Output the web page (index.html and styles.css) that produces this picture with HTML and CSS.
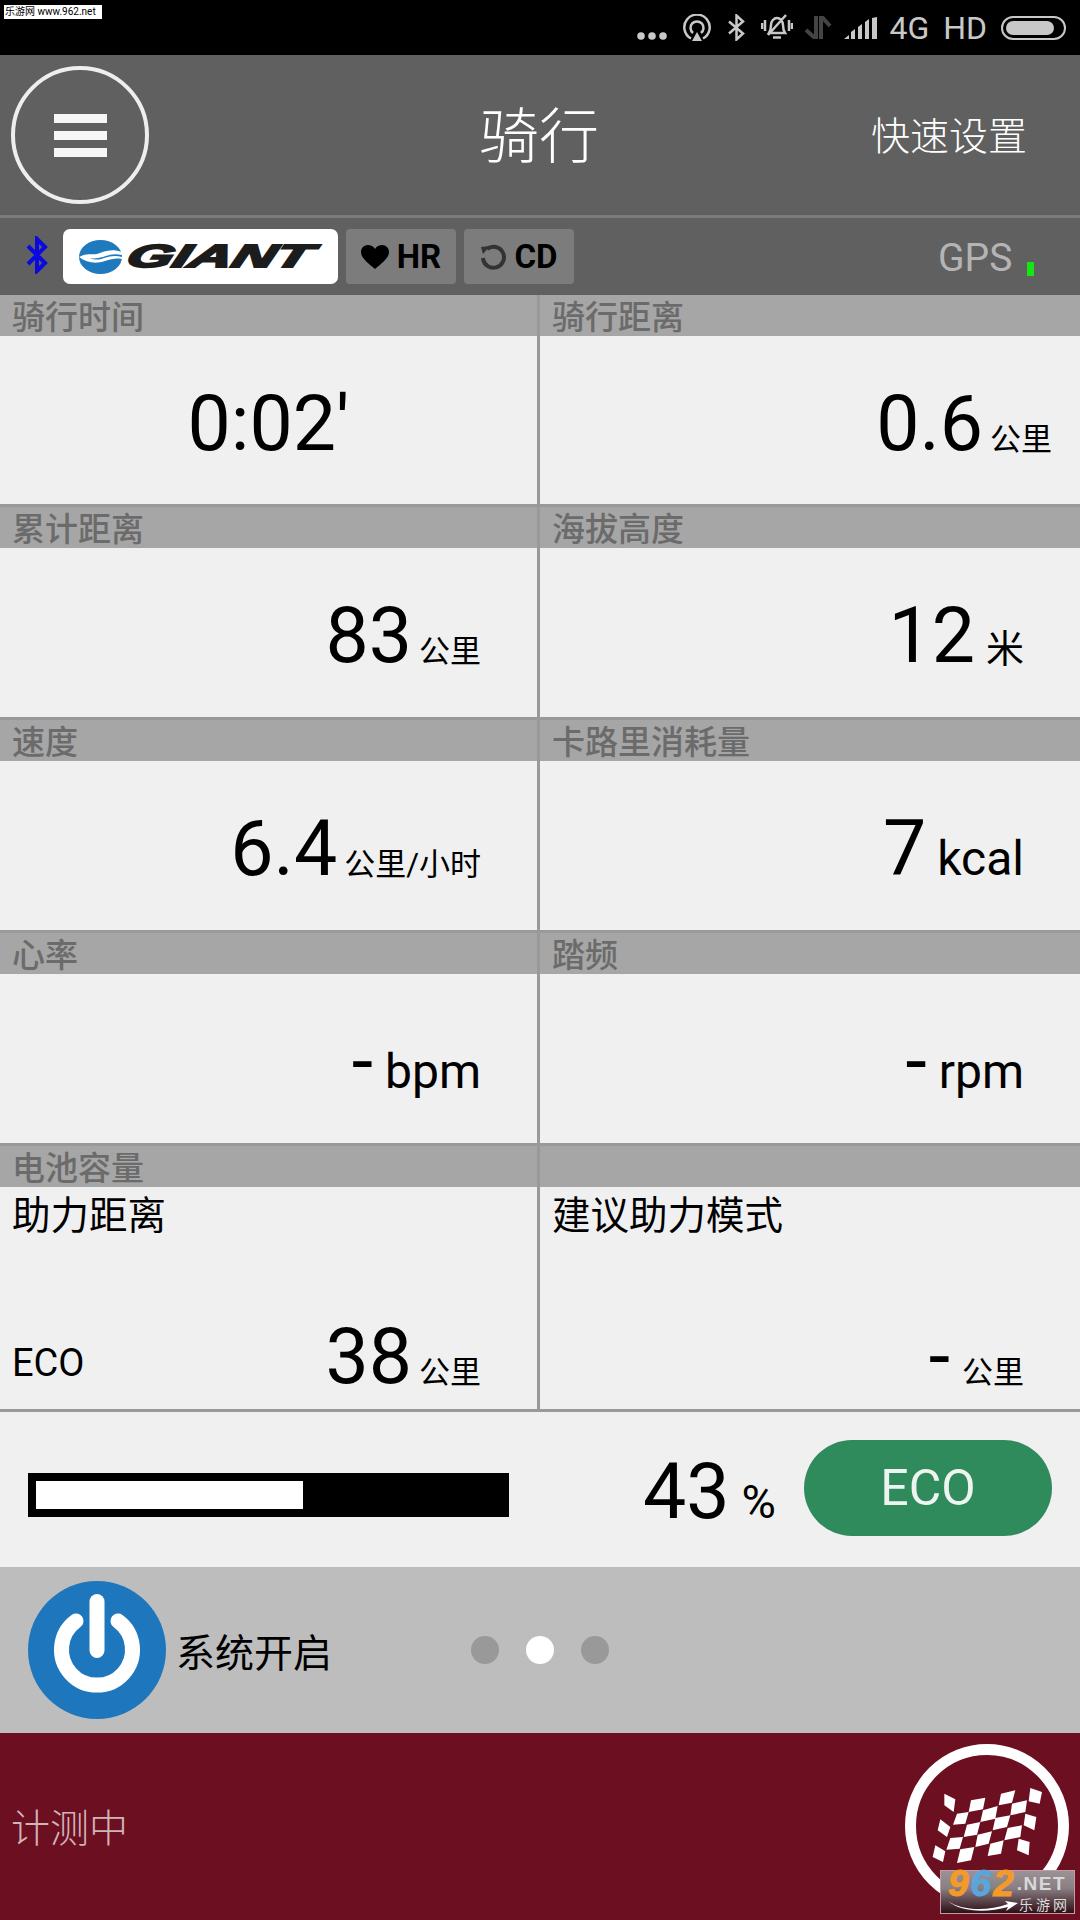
FILE: index.html
```html
<!DOCTYPE html>
<html lang="zh">
<head>
<title>骑行</title>
<meta charset="utf-8">
<link rel="stylesheet" href="styles.css">
</head>
<body>

<div class="statusbar">
  <div class="stamp">乐游网 www.962.net</div>
  <div class="status-icons">
    <svg class="dots" width="30" height="8" viewBox="0 0 30 8"><circle cx="4" cy="4" r="3.800"/><circle cx="15" cy="4" r="3.800"/><circle cx="26" cy="4" r="3.800"/></svg>
    <svg class="icon-cast" width="28" height="27" viewBox="0 0 28 27"><path d="M8 24.500A12.700 12.700 0 1 1 20 24.500"/><path d="M10 19A6.500 6.500 0 1 1 18 19"/><path class="fill" d="M14 18l5 9H9z"/></svg>
    <svg class="icon-bt" width="19" height="27" viewBox="0 0 19 27"><path d="M2 7.500l14 12-6.500 6V1.500l6.500 6-14 12"/></svg>
    <svg class="icon-bell" width="32" height="28" viewBox="0 0 32 28"><path d="M8 20c2-3 2-5 2-8 0-4 3-7 6-7s6 3 6 7c0 3 0 5 2 8zM12 24.500h8M25 2L7 22M1 10v6M4 7v11M31 10v6M28 7v11"/></svg>
    <svg class="icon-data" width="27" height="23" viewBox="0 0 27 23"><path d="M11 0v23L1 14M16 23V0l9 10"/></svg>
    <svg class="icon-signal" width="34" height="22" viewBox="0 0 34 22"><path d="M0 22l5-4v4zM7 22v-7l4-3v10zM14 22V10l4-3v15zM21 22V5l4-3v20zM28 22V1l5-1v22z"/></svg>
    <span class="status-text">4G</span>
    <span class="status-text">HD</span>
    <div class="battery"><div class="battery-level"></div></div>
  </div>
</div>

<header class="topbar">
  <div class="menu-btn"><span></span><span></span><span></span></div>
  <h1>骑行</h1>
  <div class="quick">快速设置</div>
</header>

<div class="toolbar">
  <svg class="bt" width="24" height="38" viewBox="0 0 24 38"><path d="M3 10l17 17-8 8V3l8 8L3 28"/></svg>
  <div class="giant">
    <svg width="43" height="34" viewBox="0 0 43 34"><ellipse cx="21.500" cy="17" rx="21.500" ry="17" fill="#1f79bd"/><path d="M0 17c7-4 12-2 18-3 7-2 13-6 25-2v3c-8-2-14 0-19 2-5 1-8 2-13 1 5 2 9 2 14 0 6-2 12-3 18-1v2c-6-1-11 0-17 2-9 3-18 2-26-4z" fill="#fff"/></svg>
    <span>GIANT</span>
  </div>
  <div class="chip">
    <svg width="28" height="24" viewBox="0 0 28 24"><path d="M14 24C7 18 0 13 0 7c0-4 3-7 7-7 3 0 5 1 7 4 2-3 4-4 7-4 4 0 7 3 7 7 0 6-7 11-14 17z"/></svg>
    HR
  </div>
  <div class="chip">
    <svg width="26" height="26" viewBox="0 0 26 26"><path class="ring" d="M7 5a10.500 10.500 0 1 1-4 9"/><path class="tip" d="M1 3l9-1-7 8z"/></svg>
    CD
  </div>
  <div class="gps">GPS<i></i></div>
</div>

<main class="grid">
  <section class="cell first">
    <h2>骑行时间</h2>
    <div class="value center"><b>0:02'</b></div>
  </section>
  <section class="cell first">
    <h2>骑行距离</h2>
    <div class="value near"><b>0.6</b><span>公里</span></div>
  </section>
  <section class="cell">
    <h2>累计距离</h2>
    <div class="value"><b>83</b><span>公里</span></div>
  </section>
  <section class="cell">
    <h2>海拔高度</h2>
    <div class="value"><b>12</b><span class="metre">米</span></div>
  </section>
  <section class="cell">
    <h2>速度</h2>
    <div class="value"><b>6.4</b><span>公里/小时</span></div>
  </section>
  <section class="cell">
    <h2>卡路里消耗量</h2>
    <div class="value"><b>7</b><span class="latin">kcal</span></div>
  </section>
  <section class="cell">
    <h2>心率</h2>
    <div class="value"><b class="dash">-</b><span class="latin">bpm</span></div>
  </section>
  <section class="cell">
    <h2>踏频</h2>
    <div class="value"><b class="dash">-</b><span class="latin">rpm</span></div>
  </section>
  <section class="cell tall">
    <h2>电池容量</h2>
    <div class="assist-title">助力距离</div>
    <div class="value assist"><em>ECO</em><b>38</b><span>公里</span></div>
  </section>
  <section class="cell tall">
    <h2>&nbsp;</h2>
    <div class="assist-title">建议助力模式</div>
    <div class="value assist"><b class="dash">-</b><span>公里</span></div>
  </section>
</main>

<div class="battery-row">
  <div class="bar"><div class="bar-fill" style="width: 267px"></div></div>
  <div class="percent"><b>43</b><span>%</span></div>
  <div class="eco">ECO</div>
</div>

<div class="system-row">
  <svg class="power" width="138" height="138" viewBox="0 0 138 138"><circle cx="69" cy="69" r="69" fill="#1e76bd"/><path d="M48 40A35.500 35.500 0 1 0 90 40" fill="none" stroke="#fff" stroke-width="15" stroke-linecap="round"/><path d="M69 20.500v49" fill="none" stroke="#fff" stroke-width="15" stroke-linecap="round"/></svg>
  <div class="system-label">系统开启</div>
  <div class="pager"><i></i><i class="on"></i><i></i></div>
</div>

<footer class="status-row">
  <div class="measuring">计测中</div>
  <div class="finish">
    <svg width="110" height="76" viewBox="515 268 330 228" fill="#fff">
      <path d="M552 285l33 17-5 38-28-20zM632 305l43-8-7 35-43 8zM722 285l43-10-10 37-40 8zM810 268l35 12-7 35-33-7z"/>
      <path d="M590 345l35-5-10 35-37 3zM668 335l44-13-7 38-45 10zM755 315l45-10-5 35-45 10z"/>
      <path d="M540 362l30 23-10 30-28-20zM620 378l40-8-10 38-40 7zM705 358l45-8-10 35-43 10zM795 345l33 10-6 40-32-15z"/>
      <path d="M570 418l38-3-10 35-40 3zM652 408l43-10-10 37-40 10zM742 388l43-8-5 35-48 10z"/>
      <path d="M525 440l30 18-7 32-31-15zM600 452l42-7-10 40-42 8zM690 435l40-10-8 40-40 7zM775 420l33 10-3 40-35-15z"/>
    </svg>
  </div>
  <div class="site-mark">
    <div class="site-top"><b>9<u>6</u>2</b><span>.NET</span></div>
    <div class="site-sub">乐游网</div>
    <svg class="swoosh" width="70" height="13" viewBox="0 0 70 13"><path d="M0 1c12 9 38 11 60 3l-3-3 13 2-12 8 2-4C38 13 12 12 0 1z" fill="#fff"/></svg>
  </div>
</footer>

</body>
</html>
```

FILE: styles.css
```css
* {
  box-sizing: border-box;
}

body {
  margin: 0;
  width: 1080px;
  height: 1920px;
  overflow: hidden;
  background: #f0f0f0;
  font-family: Roboto, "Noto Sans CJK SC", sans-serif;
  color: #000;
}

h1, h2 {
  margin: 0;
  font-weight: normal;
}

/* Status bar */
.statusbar {
  height: 55px;
  background: #000;
  display: flex;
  justify-content: flex-end;
  padding-right: 14px;
  position: relative;
}

.stamp {
  position: absolute;
  left: 4px;
  top: 5px;
  width: 98px;
  height: 14px;
  background: #fff;
  font-size: 10px;
  line-height: 14px;
  padding-left: 1px;
  white-space: nowrap;
}

.status-icons {
  display: flex;
  align-items: center;
  color: #c8c8c8;
  height: 55px;
}

.status-icons svg {
  fill: none;
  stroke: #c8c8c8;
  stroke-width: 2.500;
}

.status-icons .dots {
  stroke: none;
  fill: #c8c8c8;
  margin: 17px 16px 0 0;
}

.status-icons .fill {
  fill: #c8c8c8;
  stroke: none;
}

.icon-cast {
  margin: -1px 16px 0 0;
}

.icon-bt {
  margin: -1px 15px 0 0;
}

.icon-bell {
  margin: -1px 12px 0 0;
}

.status-icons .icon-data {
  stroke: #444;
  stroke-width: 4;
  margin-right: 12px;
}

.status-icons .icon-signal {
  fill: #c8c8c8;
  stroke: none;
  margin-right: 11px;
}

.status-text {
  font-size: 32px;
  margin-right: 14px;
}

.battery {
  width: 65px;
  height: 24px;
  border: 2px solid #c8c8c8;
  border-radius: 12px;
  padding: 3px;
}

.battery-level {
  width: 48px;
  height: 14px;
  background: #c8c8c8;
  border-radius: 7px;
}

/* Title bar */
.topbar {
  height: 163px;
  background: #606060;
  border-bottom: 3px solid #7c7c7c;
  display: flex;
  align-items: center;
  position: relative;
  color: #fff;
}

.menu-btn {
  width: 138px;
  height: 138px;
  margin-left: 11px;
  border: 4px solid #eee;
  border-radius: 50%;
  display: flex;
  flex-direction: column;
  justify-content: center;
  align-items: center;
  gap: 8px;
}

.menu-btn span {
  width: 53px;
  height: 9px;
  background: #f6f6f6;
}

.topbar h1 {
  position: absolute;
  left: 479px;
  top: 48px;
  font-size: 60px;
  line-height: 70px;
  font-weight: 300;
}

.quick {
  position: absolute;
  left: 871px;
  top: 57px;
  font-size: 39px;
  line-height: 50px;
  font-weight: 300;
}

/* Sensor toolbar */
.toolbar {
  height: 77px;
  background: #606060;
  display: flex;
  align-items: flex-start;
  padding: 11px 0 0 25px;
  position: relative;
}

.bt {
  fill: none;
  stroke: #0a0ae0;
  stroke-width: 4;
  margin: 7px 14px 0 0;
}

.giant {
  width: 275px;
  height: 55px;
  background: #fff;
  border-radius: 7px;
  display: flex;
  align-items: center;
  padding-left: 16px;
  gap: 6px;
  margin-right: 8px;
}

.giant span {
  font-family: "Liberation Sans", sans-serif;
  font-weight: bold;
  font-style: italic;
  font-size: 32px;
  color: #1c1c1c;
  -webkit-text-stroke: 2px #1c1c1c;
  transform: scaleX(1.850) skewX(-10deg);
  transform-origin: left center;
}

.chip {
  height: 55px;
  width: 110px;
  background: #7c7c7c;
  border-radius: 4px;
  margin-right: 8px;
  display: flex;
  align-items: center;
  justify-content: center;
  gap: 8px;
  font-size: 33px;
  font-weight: 700;
}

.chip .ring {
  fill: none;
  stroke: #333;
  stroke-width: 4;
}

.chip .tip {
  fill: #333;
}

.gps {
  position: absolute;
  left: 938px;
  top: 18px;
  font-size: 39px;
  line-height: 44px;
  color: #b4b4b4;
}

.gps i {
  position: absolute;
  left: 89px;
  top: 26px;
  width: 7px;
  height: 14px;
  background: #14e614;
}

/* Data grid */
.grid {
  display: grid;
  grid-template-columns: 540px 540px;
}

.cell {
  height: 213px;
  border-bottom: 3px solid #999;
  display: flex;
  flex-direction: column;
}

.cell.first {
  height: 212px;
}

.cell:nth-child(odd) {
  border-right: 3px solid #999;
}

.cell.tall {
  height: 266px;
}

.cell h2 {
  height: 41px;
  background: #a6a6a6;
  color: #6b6b6b;
  font-size: 33px;
  line-height: 46px;
  font-weight: 500;
  padding-left: 12px;
  overflow: hidden;
  flex: none;
}

.value {
  flex: 1;
  display: flex;
  justify-content: flex-end;
  align-items: baseline;
  padding: 40px 56px 0 0;
}

.value.near {
  padding-right: 28px;
}

.value b {
  font-weight: normal;
  font-size: 77px;
  line-height: 96px;
  margin-right: 7px;
}

.value span {
  font-size: 31px;
}

.value span.latin {
  font-size: 48px;
  margin-left: 4px;
}

.value span.metre {
  font-size: 38px;
  margin-left: 4px;
}

.value.center {
  justify-content: center;
  padding-right: 0;
}

.value.center b {
  margin-right: 0;
}

.value b.dash {
  margin-right: 12px;
}

.value b.dash + .latin {
  margin-left: 0;
}

.assist-title {
  font-size: 38.500px;
  line-height: 50px;
  padding: 4px 0 0 12px;
}

.value.assist {
  padding-top: 68px;
}

.value.assist em {
  font-style: normal;
  font-size: 38px;
  margin: 0 auto 24px 12px;
  align-self: flex-end;
}

/* Battery row */
.battery-row {
  height: 155px;
  display: flex;
  align-items: center;
  padding: 10px 0 0 28px;
  position: relative;
}

.bar {
  width: 481px;
  height: 44px;
  background: #000;
  padding: 8px;
}

.bar-fill {
  height: 28px;
  background: #fff;
}

.percent {
  position: absolute;
  left: 643px;
  top: 32px;
  display: flex;
  align-items: baseline;
}

.percent b {
  font-weight: normal;
  font-size: 77px;
  line-height: 96px;
  margin-right: 12px;
}

.percent span {
  font-size: 47px;
}

.eco {
  position: absolute;
  left: 804px;
  top: 28px;
  width: 248px;
  height: 96px;
  border-radius: 48px;
  background: #2f8b5b;
  color: #eef4f0;
  font-size: 50px;
  line-height: 96px;
  text-align: center;
}

/* System row */
.system-row {
  height: 166px;
  background: #bdbdbd;
  display: flex;
  align-items: center;
  padding-left: 28px;
  position: relative;
}

.system-label {
  margin-left: 10px;
  font-size: 39px;
}

.pager {
  position: absolute;
  left: 471px;
  top: 69px;
  display: flex;
  gap: 27px;
}

.pager i {
  width: 28px;
  height: 28px;
  border-radius: 50%;
  background: #999;
}

.pager i.on {
  background: #fff;
}

/* Measuring row */
.status-row {
  height: 187px;
  background: #6c0f20;
  position: relative;
}

.measuring {
  position: absolute;
  left: 11px;
  top: 71px;
  font-size: 39px;
  line-height: 50px;
  color: #d0b4ba;
  font-weight: 300;
}

.finish {
  position: absolute;
  left: 905px;
  top: 11px;
  width: 164px;
  height: 164px;
  border: 11px solid #fff;
  border-radius: 50%;
  display: flex;
  align-items: center;
  justify-content: center;
}

.site-mark {
  position: absolute;
  left: 940px;
  top: 137px;
  width: 135px;
  height: 44px;
  border: 1px solid #c79aa5;
  background: linear-gradient(#9a9296, #8a8084 40%, #2e0f16);
  padding-left: 7px;
}

.site-top {
  display: flex;
  align-items: center;
  height: 26px;
  font-family: "Liberation Sans", sans-serif;
}

.site-top b {
  font-size: 37px;
  line-height: 26px;
  font-style: italic;
  letter-spacing: 2px;
  color: #f39a2b;
  -webkit-text-stroke: 1px #f39a2b;
  margin-right: 1px;
}

.site-top u {
  text-decoration: none;
  color: #5aa5dc;
  -webkit-text-stroke: 1px #5aa5dc;
}

.site-top span {
  font-size: 19px;
  font-weight: bold;
  letter-spacing: 1.500px;
  color: #d8d8d8;
  white-space: nowrap;
}

.site-sub {
  font-size: 14px;
  line-height: 16px;
  letter-spacing: 3px;
  text-align: right;
  padding-right: 4px;
  color: #ddd;
}

.swoosh {
  position: absolute;
  left: 7px;
  top: 29px;
}
```
